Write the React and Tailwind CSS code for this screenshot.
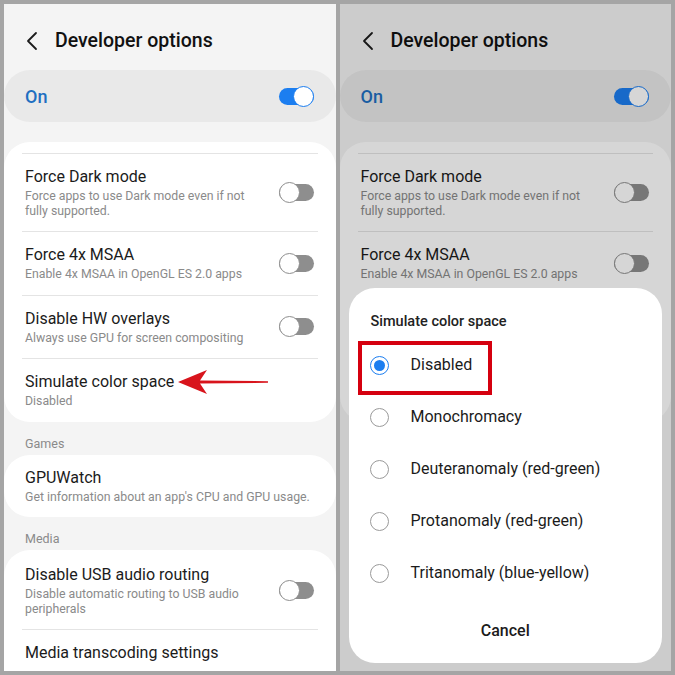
import React from "react";

const Toggle = ({ on }) => (
  <div className="relative w-[35px] h-[21px] shrink-0">
    <div
      className={`absolute left-0 right-0 top-[2px] bottom-[2px] rounded-full ${
        on ? "bg-[#1c7ef0]" : "bg-[#8e8e8e]"
      }`}
    />
    <div
      className={`absolute top-0 w-[21px] h-[21px] rounded-full bg-white border-[1.5px] ${
        on ? "right-0 border-[#1c7ef0]" : "left-0 border-[#8e8e8e]"
      }`}
    />
  </div>
);

const Item = ({ title, sub, toggle, divider = true }) => (
  <div>
    {divider && <div className="mx-[18px] h-px bg-[#e4e4e4]" />}
    <div className={`flex items-center pl-[21px] py-[13px] ${toggle ? "pr-[22px]" : "pr-[8px]"}`}>
      <div className={`flex-1 min-w-0 ${toggle ? "pr-[30px]" : ""}`}>
        <div className="text-[16px] leading-[20px] text-[#1b1b1b]">{title}</div>
        {sub && (
          <div className="text-[12.3px] leading-[14.5px] text-[#8a8a8a] mt-[2px]">{sub}</div>
        )}
      </div>
      {toggle && <Toggle on={false} />}
    </div>
  </div>
);

const Section = ({ label }) => (
  <div className="h-[33px] pt-[14px] pl-[21px] text-[12.5px] leading-[15px] text-[#8a8a8a]">{label}</div>
);

const options = [
  "Disabled",
  "Monochromacy",
  "Deuteranomaly (red-green)",
  "Protanomaly (red-green)",
  "Tritanomaly (blue-yellow)",
];

const Dialog = () => (
  <div className="absolute left-[9px] right-[9px] bottom-[8px] h-[375px] bg-white rounded-[26px]">
    <div className="pt-[24px] pl-[22px] text-[14.5px] leading-[20px] font-medium text-[#222]">
      Simulate color space
    </div>
    <div className="mt-[7px]">
      {options.map((o, i) => (
        <div key={o} className="h-[52px] flex items-center pl-[21px]">
          <div
            className={`w-[19px] h-[19px] rounded-full border-[1.5px] flex items-center justify-center ${
              i === 0 ? "border-[#1c7ef0]" : "border-[#9a9a9a]"
            }`}
          >
            {i === 0 && <div className="w-[11px] h-[11px] rounded-full bg-[#1c7ef0]" />}
          </div>
          <div className="ml-[22px] text-[16px] text-[#1b1b1b]">{o}</div>
        </div>
      ))}
    </div>
    <div className="h-[63px] flex items-center justify-center text-[16px] font-medium text-[#1b1b1b]">
      Cancel
    </div>
    {/* red highlight */}
    <div className="absolute left-[9px] top-[53px] w-[134px] h-[54px] border-[4px] border-[#d5000f]" />
  </div>
);

const Panel = ({ dim }) => (
  <div className="relative flex-1 bg-[#f4f4f4] overflow-hidden">
    {/* HEADER */}
    <div className="flex items-center h-[32px] mt-[21px] pl-[22px]">
      <svg width="12" height="20" viewBox="0 0 12 20" className="shrink-0">
        <polyline points="10,2 2,10 10,18" fill="none" stroke="#1b1b1b" strokeWidth="1.8" strokeLinecap="round" strokeLinejoin="round" />
      </svg>
      <div className="ml-[17px] text-[19.5px] font-medium text-[#111]">Developer options</div>
    </div>

    {/* MASTER SWITCH */}
    <div className="mt-[13px] h-[52px] bg-[#e9e9e9] rounded-[26px] flex items-center justify-between pl-[21px] pr-[22px]">
      <div className="text-[18px] font-medium text-[#1e6fc1]">On</div>
      <Toggle on />
    </div>

    {/* DEBUGGING CARD */}
    <div className="mt-[20px] bg-white rounded-[26px] pt-[11px]">
      <Item title="Force Dark mode" sub="Force apps to use Dark mode even if not fully supported." toggle />
      <Item title="Force 4x MSAA" sub="Enable 4x MSAA in OpenGL ES 2.0 apps" toggle />
      <Item title="Disable HW overlays" sub="Always use GPU for screen compositing" toggle />
      <div className="relative">
        <Item title="Simulate color space" sub="Disabled" />
        {!dim && (
          <svg className="absolute left-[172px] top-[11px]" width="96" height="26" viewBox="0 0 96 26">
            <path d="M2,13 L31,1 L24,11.5 L92,12.2 L92,13.8 L24,14.5 L31,25 Z" fill="#d8141c" />
          </svg>
        )}
      </div>
    </div>

    {!dim && (
      <>
        <Section label="Games" />
        <div className="bg-white rounded-[26px]">
          <Item title="GPUWatch" sub="Get information about an app's CPU and GPU usage." divider={false} />
        </div>

        <Section label="Media" />
        <div className="bg-white rounded-[26px] pt-[2px] pb-10">
          <Item title="Disable USB audio routing" sub="Disable automatic routing to USB audio peripherals" toggle divider={false} />
          <Item title="Media transcoding settings" />
        </div>
      </>
    )}

    {dim && (
      <>
        <div className="absolute inset-0 bg-black/[0.16]" />
        <Dialog />
      </>
    )}
  </div>
);

export default function App() {
  return (
    <div
      className="w-[675px] h-[675px] bg-[#a5a5a5] p-[4px] flex gap-[4px]"
      style={{ fontFamily: "Roboto, 'Liberation Sans', sans-serif" }}
    >
      <Panel />
      <Panel dim />
    </div>
  );
}
